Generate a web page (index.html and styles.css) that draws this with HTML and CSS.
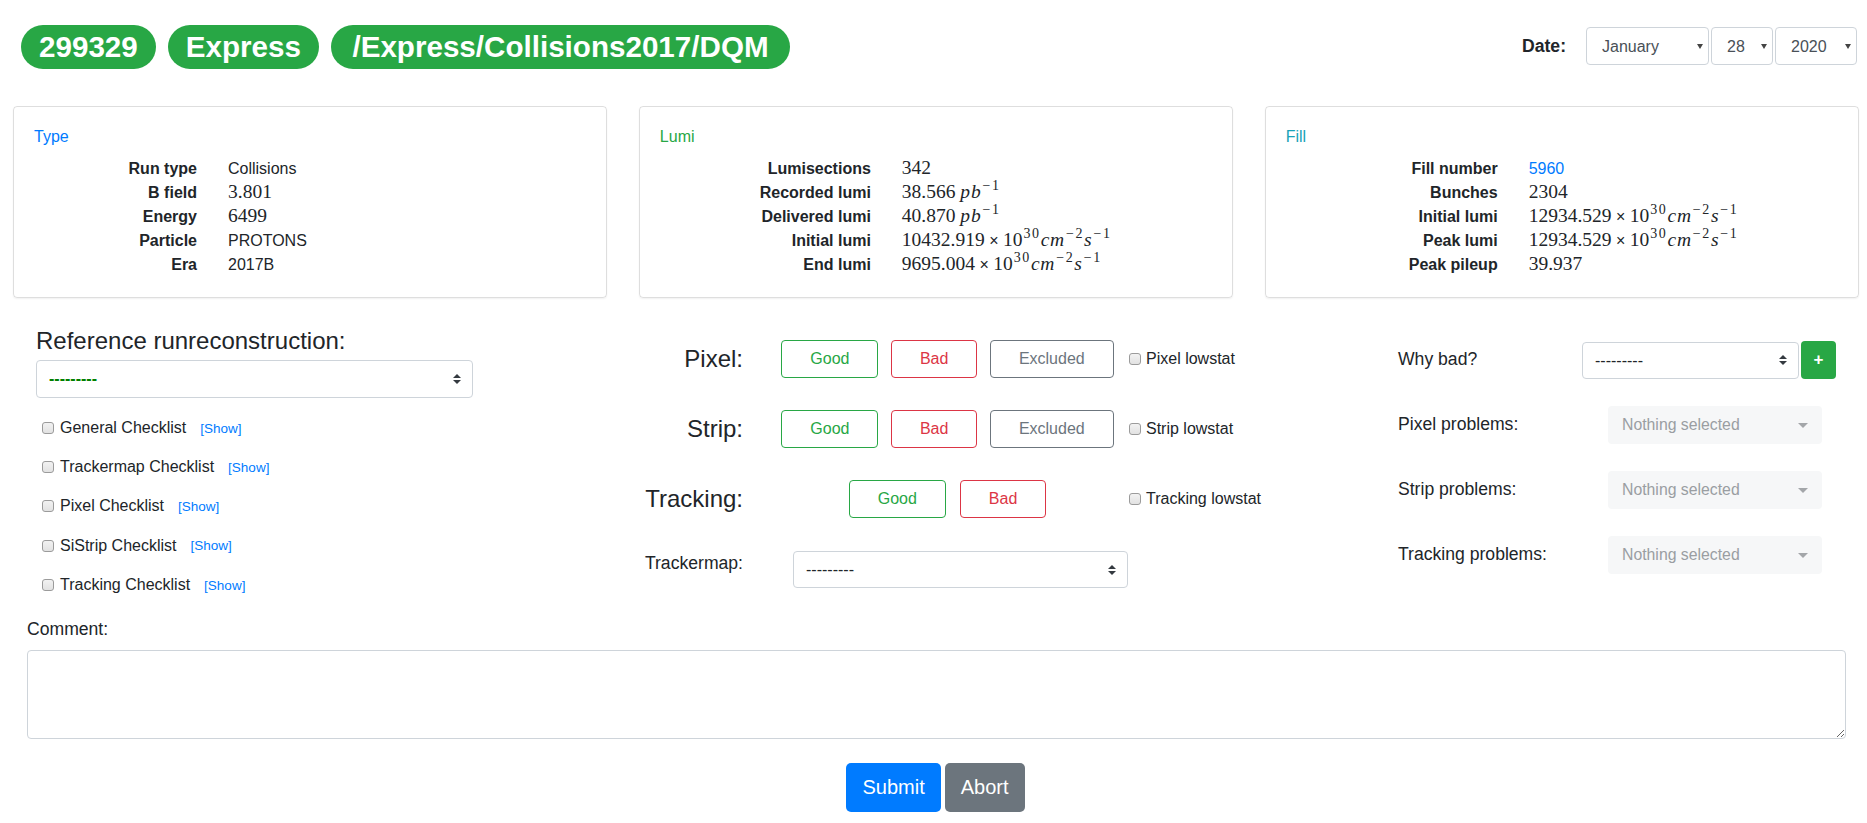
FILE: index.html
```html
<!DOCTYPE html>
<html lang="en">
<head>
<meta charset="utf-8">
<title>Run certification</title>
<link rel="stylesheet" href="styles.css">
</head>
<body>
<header class="topbar">
  <div class="badges">
    <span class="pill">299329</span>
    <span class="pill">Express</span>
    <span class="pill pill-wide">/Express/Collisions2017/DQM</span>
  </div>
  <div class="date">
    <span class="date-label">Date:</span>
    <span class="sel dsel-month"><select class="date-select"><option>January</option></select><span class="tri"></span></span>
    <span class="sel dsel-day"><select class="date-select"><option>28</option></select><span class="tri"></span></span>
    <span class="sel dsel-year"><select class="date-select"><option>2020</option></select><span class="tri"></span></span>
  </div>
</header>

<section class="cards">
  <div class="card">
    <div class="card-title t-blue">Type</div>
    <table class="kv kv-type">
      <tr><th>Run type</th><td>Collisions</td></tr>
      <tr><th>B field</th><td><span class="m">3.801</span></td></tr>
      <tr><th>Energy</th><td><span class="m">6499</span></td></tr>
      <tr><th>Particle</th><td>PROTONS</td></tr>
      <tr><th>Era</th><td>2017B</td></tr>
    </table>
  </div>
  <div class="card">
    <div class="card-title t-green">Lumi</div>
    <table class="kv kv-lumi">
      <tr><th>Lumisections</th><td><span class="m">342</span></td></tr>
      <tr><th>Recorded lumi</th><td><span class="m">38.566 <i>pb</i><sup>−1</sup></span></td></tr>
      <tr><th>Delivered lumi</th><td><span class="m">40.870 <i>pb</i><sup>−1</sup></span></td></tr>
      <tr><th>Initial lumi</th><td><span class="m">10432.919</span> × <span class="m">10<sup>30</sup><i>cm</i><sup>−2</sup><i>s</i><sup>−1</sup></span></td></tr>
      <tr><th>End lumi</th><td><span class="m">9695.004</span> × <span class="m">10<sup>30</sup><i>cm</i><sup>−2</sup><i>s</i><sup>−1</sup></span></td></tr>
    </table>
  </div>
  <div class="card">
    <div class="card-title t-cyan">Fill</div>
    <table class="kv kv-fill">
      <tr><th>Fill number</th><td><a class="link" href="#">5960</a></td></tr>
      <tr><th>Bunches</th><td><span class="m">2304</span></td></tr>
      <tr><th>Initial lumi</th><td><span class="m">12934.529</span> × <span class="m">10<sup>30</sup><i>cm</i><sup>−2</sup><i>s</i><sup>−1</sup></span></td></tr>
      <tr><th>Peak lumi</th><td><span class="m">12934.529</span> × <span class="m">10<sup>30</sup><i>cm</i><sup>−2</sup><i>s</i><sup>−1</sup></span></td></tr>
      <tr><th>Peak pileup</th><td><span class="m">39.937</span></td></tr>
    </table>
  </div>
</section>

<section class="form">
  <div class="col-left">
    <h4 class="ref-title">Reference runreconstruction:</h4>
    <span class="sel sel-ref">
      <select class="ctl ctl-green"><option>---------</option></select>
      <svg class="updown" viewBox="0 0 4 5" width="8" height="10"><path d="M2 0L0 2h4zm0 5L0 3h4z" fill="#343a40"/></svg>
    </span>
    <ul class="checklist">
      <li><input type="checkbox" class="cb"><span class="cl-text">General Checklist</span><a class="show" href="#">[Show]</a></li>
      <li><input type="checkbox" class="cb"><span class="cl-text">Trackermap Checklist</span><a class="show" href="#">[Show]</a></li>
      <li><input type="checkbox" class="cb"><span class="cl-text">Pixel Checklist</span><a class="show" href="#">[Show]</a></li>
      <li><input type="checkbox" class="cb"><span class="cl-text">SiStrip Checklist</span><a class="show" href="#">[Show]</a></li>
      <li><input type="checkbox" class="cb"><span class="cl-text">Tracking Checklist</span><a class="show" href="#">[Show]</a></li>
    </ul>
  </div>

  <div class="col-mid">
    <div class="qrow">
      <span class="qlabel">Pixel:</span>
      <div class="qbtns">
        <button class="ob ob-good">Good</button>
        <button class="ob ob-bad">Bad</button>
        <button class="ob ob-excl">Excluded</button>
      </div>
      <label class="lowstat"><input type="checkbox" class="cb">Pixel lowstat</label>
    </div>
    <div class="qrow">
      <span class="qlabel">Strip:</span>
      <div class="qbtns">
        <button class="ob ob-good">Good</button>
        <button class="ob ob-bad">Bad</button>
        <button class="ob ob-excl">Excluded</button>
      </div>
      <label class="lowstat"><input type="checkbox" class="cb">Strip lowstat</label>
    </div>
    <div class="qrow qrow-last">
      <span class="qlabel">Tracking:</span>
      <div class="qbtns qbtns-wide">
        <button class="ob ob-good">Good</button>
        <button class="ob ob-bad">Bad</button>
      </div>
      <label class="lowstat"><input type="checkbox" class="cb">Tracking lowstat</label>
    </div>
    <div class="tmrow">
      <span class="tmlabel">Trackermap:</span>
      <span class="sel sel-tm">
        <select class="ctl"><option>---------</option></select>
        <svg class="updown" viewBox="0 0 4 5" width="8" height="10"><path d="M2 0L0 2h4zm0 5L0 3h4z" fill="#343a40"/></svg>
      </span>
    </div>
  </div>

  <div class="col-right">
    <div class="rrow">
      <span class="rlabel rl-why">Why bad?</span>
      <span class="sel sel-why">
        <select class="ctl"><option>---------</option></select>
        <svg class="updown" viewBox="0 0 4 5" width="8" height="10"><path d="M2 0L0 2h4zm0 5L0 3h4z" fill="#343a40"/></svg>
      </span>
      <button class="plus">+</button>
    </div>
    <div class="rrow">
      <span class="rlabel rl-prob">Pixel problems:</span>
      <div class="nothing">Nothing selected<span class="caret"></span></div>
    </div>
    <div class="rrow">
      <span class="rlabel rl-prob">Strip problems:</span>
      <div class="nothing">Nothing selected<span class="caret"></span></div>
    </div>
    <div class="rrow">
      <span class="rlabel rl-prob">Tracking problems:</span>
      <div class="nothing">Nothing selected<span class="caret"></span></div>
    </div>
  </div>
</section>

<section class="comment">
  <label class="comment-label">Comment:</label>
  <textarea class="comment-box"></textarea>
</section>

<div class="actions">
  <button class="bl bl-primary">Submit</button>
  <button class="bl bl-secondary">Abort</button>
</div>
</body>
</html>
```
FILE: styles.css
```css
* { box-sizing: border-box; }

body {
  margin: 0;
  font-family: "Liberation Sans", Arial, sans-serif;
  font-size: 16px;
  line-height: 1.5;
  color: #212529;
  background: #fff;
}

/* ---------- header ---------- */
.topbar {
  display: flex;
  justify-content: space-between;
  align-items: flex-start;
  padding: 25px 10px 0 21px;
}
.badges { display: flex; gap: 12px; }
.pill {
  display: inline-flex;
  align-items: center;
  height: 44px;
  padding: 0 18px;
  border-radius: 22px;
  background: #28a745;
  color: #fff;
  font-weight: bold;
  font-size: 29.6px;
  line-height: 1;
}
.pill-wide { padding: 0 21.5px; }
.date {
  display: flex;
  align-items: center;
  padding-top: 2px;
}
.date-label {
  font-weight: bold;
  font-size: 17.6px;
  margin-right: 20px;
}
.sel {
  position: relative;
  display: inline-block;
}
.sel select {
  display: block;
  width: 100%;
  height: 100%;
  appearance: none;
  -webkit-appearance: none;
  background: #fff;
  border: 1px solid #ced4da;
  border-radius: 4px;
  font-family: "Liberation Sans", Arial, sans-serif;
  font-size: 16px;
  color: #495057;
  outline: none;
}
.date-select { padding: 0 0 0 15px; }
.dsel-month { width: 123px; height: 38px; }
.dsel-day { width: 62px; height: 38px; margin-left: 2px; }
.dsel-year { width: 82px; height: 38px; margin-left: 2px; }
.tri {
  position: absolute;
  right: 6px;
  top: 17px;
  width: 0;
  height: 0;
  border-left: 3.5px solid transparent;
  border-right: 3.5px solid transparent;
  border-top: 5px solid #444;
}

/* ---------- cards ---------- */
.cards {
  display: grid;
  grid-template-columns: repeat(3, 1fr);
  column-gap: 31.5px;
  padding: 0 8px 0 13px;
  margin-top: 37px;
}
.card {
  border: 1px solid rgba(0, 0, 0, 0.13);
  border-radius: 4px;
  padding: 20px;
  box-shadow: 0 1px 2px rgba(0, 0, 0, 0.06);
}
.card-title {
  font-size: 16px;
  line-height: 19px;
  margin-bottom: 11px;
}
.t-blue { color: #007bff; }
.t-green { color: #28a745; }
.t-cyan { color: #17a2b8; }

.kv { border-collapse: collapse; }
.kv th {
  text-align: right;
  font-weight: bold;
  padding: 0;
  height: 24px;
  white-space: nowrap;
}
.kv td {
  padding: 0 0 0 31px;
  height: 24px;
  white-space: nowrap;
}
.kv-type th { width: 163px; }
.kv-lumi th { width: 211px; }
.kv-fill th { width: 212px; }
.link { color: #007bff; text-decoration: none; }

.m {
  font-family: "Liberation Serif", "Times New Roman", serif;
  font-size: 19.5px;
  line-height: 1;
}
.m i { font-style: italic; letter-spacing: 0.8px; }
.m sup {
  font-size: 14px;
  line-height: 0;
  vertical-align: 8px;
  letter-spacing: 1.6px;
  margin-left: 1px;
}

/* ---------- form ---------- */
.form {
  display: grid;
  grid-template-columns: 604px 758px 438px;
  align-items: start;
  padding-left: 36px;
  margin-top: 29px;
}
.ref-title {
  margin: 0 0 4px;
  font-size: 24px;
  font-weight: normal;
  line-height: 28.8px;
}
.sel-ref { width: 437px; height: 38px; }
.ctl { padding: 0 0 0 12px; color: #212529 !important; }
.ctl-green { color: #008000 !important; font-weight: bold; }
.updown {
  position: absolute;
  right: 12px;
  top: 50%;
  margin-top: -5px;
}

.checklist {
  list-style: none;
  margin: 18px 0 0;
  padding: 0;
  display: flex;
  flex-direction: column;
  gap: 15.25px;
}
.checklist li {
  display: flex;
  align-items: center;
  height: 24px;
  padding-left: 6px;
}
.cb {
  appearance: none;
  -webkit-appearance: none;
  width: 12px;
  height: 12px;
  margin: 0;
  border: 1px solid #9b9b9b;
  border-radius: 3px;
  background: linear-gradient(#f2f2f2, #e2e2e2);
  flex: none;
}
.cl-text { margin-left: 6px; }
.show {
  margin-left: 14px;
  font-size: 13.5px;
  color: #007bff;
  text-decoration: none;
  position: relative;
  top: 1px;
}

.col-mid { padding-top: 13px; }
.qrow {
  display: flex;
  align-items: center;
  height: 38px;
  margin-bottom: 32px;
}
.qrow-last { margin-bottom: 33px; }
.qlabel {
  width: 103px;
  text-align: right;
  font-size: 24px;
  line-height: 1;
}
.qbtns {
  display: flex;
  justify-content: center;
  gap: 12.5px;
  width: 331px;
  margin-left: 39px;
}
.qbtns-wide { gap: 14px; }
.ob {
  height: 38px;
  padding: 0 28px;
  background: #fff;
  border: 1px solid;
  border-radius: 4px;
  font-family: "Liberation Sans", Arial, sans-serif;
  font-size: 16px;
}
.ob-good { color: #28a745; border-color: #28a745; }
.ob-bad { color: #dc3545; border-color: #dc3545; }
.ob-excl { color: #6c757d; border-color: #6c757d; }
.lowstat {
  display: flex;
  align-items: center;
  gap: 5px;
  margin-left: 16px;
}
.tmrow {
  display: flex;
  align-items: flex-start;
}
.tmlabel {
  width: 103px;
  text-align: right;
  font-size: 17.6px;
  line-height: 24px;
}
.sel-tm { width: 335px; height: 37px; margin-left: 50px; }

.col-right { padding-top: 14px; }
.rrow {
  display: flex;
  align-items: center;
  height: 38px;
  margin-bottom: 27px;
}
.rlabel { font-size: 17.6px; line-height: 1; }
.rl-why { width: 184px; }
.rl-prob { width: 210px; }
.sel-why { width: 217px; height: 37px; }
.plus {
  width: 35px;
  height: 38px;
  margin-left: 2px;
  border: none;
  border-radius: 4px;
  background: #28a745;
  color: #fff;
  font-family: "Liberation Sans", Arial, sans-serif;
  font-weight: bold;
  font-size: 17px;
  padding: 0;
}
.nothing {
  display: flex;
  align-items: center;
  justify-content: space-between;
  width: 214px;
  height: 38px;
  padding: 0 14px 0 14px;
  background: #f6f7f8;
  border-radius: 4px;
  color: #9a9ea2;
  font-size: 15.8px;
}
.caret {
  width: 0;
  height: 0;
  border-left: 5px solid transparent;
  border-right: 5px solid transparent;
  border-top: 5px solid #a3a6a9;
}

/* ---------- comment ---------- */
.comment {
  padding: 0 21px 0 27px;
  margin-top: 15px;
}
.comment-label {
  display: block;
  font-size: 17.6px;
  line-height: 26.4px;
  margin-bottom: 8px;
}
.comment-box {
  display: block;
  width: 100%;
  height: 89px;
  border: 1px solid #ced4da;
  border-radius: 4px;
  font-family: "Liberation Sans", Arial, sans-serif;
  font-size: 16px;
}

.actions {
  display: flex;
  justify-content: center;
  gap: 4px;
  margin-top: 24px;
  padding-left: 4px;
}
.bl {
  height: 49px;
  padding: 0 16px;
  border: none;
  border-radius: 5px;
  color: #fff;
  font-family: "Liberation Sans", Arial, sans-serif;
  font-size: 20px;
}
.bl-primary { background: #007bff; }
.bl-secondary { background: #6c757d; }
```
